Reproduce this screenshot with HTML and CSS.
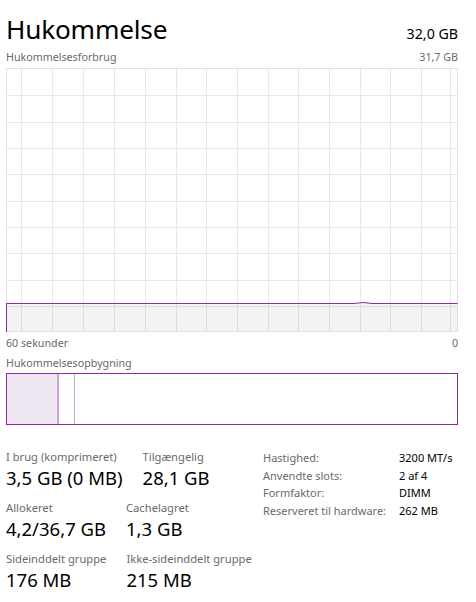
FILE: index.html
```html
<!DOCTYPE html>
<html lang="da">
<head>
<meta charset="utf-8">
<link rel="stylesheet" href="styles.css">
</head>
<body>
<div class="panel">
  <div class="header">
    <div class="title">Hukommelse</div>
    <div class="total">32,0 GB</div>
  </div>
  <div class="sub">
    <span>Hukommelsesforbrug</span>
    <span>31,7 GB</span>
  </div>
  <div class="graph">
    <svg width="452" height="264" viewBox="0 0 452 264">
      <g stroke="#e8e8e8" stroke-width="1">
        <line x1="15.5" y1="0" x2="15.5" y2="264"/>
        <line x1="46.5" y1="0" x2="46.5" y2="264"/>
        <line x1="77.5" y1="0" x2="77.5" y2="264"/>
        <line x1="108.5" y1="0" x2="108.5" y2="264"/>
        <line x1="139.5" y1="0" x2="139.5" y2="264"/>
        <line x1="170.5" y1="0" x2="170.5" y2="264"/>
        <line x1="200.5" y1="0" x2="200.5" y2="264"/>
        <line x1="231.5" y1="0" x2="231.5" y2="264"/>
        <line x1="262.5" y1="0" x2="262.5" y2="264"/>
        <line x1="292.5" y1="0" x2="292.5" y2="264"/>
        <line x1="323.5" y1="0" x2="323.5" y2="264"/>
        <line x1="354.5" y1="0" x2="354.5" y2="264"/>
        <line x1="384.5" y1="0" x2="384.5" y2="264"/>
        <line x1="415.5" y1="0" x2="415.5" y2="264"/>
        <line x1="444.5" y1="0" x2="444.5" y2="264"/>
        <line x1="0" y1="27.5" x2="452" y2="27.5"/>
        <line x1="0" y1="54.5" x2="452" y2="54.5"/>
        <line x1="0" y1="80.5" x2="452" y2="80.5"/>
        <line x1="0" y1="106.5" x2="452" y2="106.5"/>
        <line x1="0" y1="133.5" x2="452" y2="133.5"/>
        <line x1="0" y1="159.5" x2="452" y2="159.5"/>
        <line x1="0" y1="185.5" x2="452" y2="185.5"/>
        <line x1="0" y1="212.5" x2="452" y2="212.5"/>
        <line x1="0" y1="238.5" x2="452" y2="238.5"/>
      </g>
      <path d="M0.5 264 L0.5 235.5 L348 235.5 Q357 233.5 366 235.5 L452 235.5 L452 264 Z" fill="rgba(110,90,130,0.08)" stroke="none"/>
      <rect x="0.5" y="0.5" width="451" height="263" fill="none" stroke="#e0e0e0"/>
      <path d="M0.5 264 L0.5 235.5 L348 235.5 Q357 233.5 366 235.5 L451.5 235.5" fill="none" stroke="#8b2ca0" stroke-width="1"/>
    </svg>
  </div>
  <div class="axis">
    <span>60 sekunder</span>
    <span>0</span>
  </div>
  <div class="sub comp-label">
    <span>Hukommelsesopbygning</span>
  </div>
  <div class="comp">
    <div class="seg inuse"></div>
    <div class="seg modified"></div>
    <div class="seg free"></div>
  </div>
  <div class="stats">
    <div class="left">
      <div class="row">
        <div class="stat"><div class="lbl">I brug (komprimeret)</div><div class="val">3,5 GB (0 MB)</div></div>
        <div class="stat"><div class="lbl">Tilgængelig</div><div class="val">28,1 GB</div></div>
      </div>
      <div class="row">
        <div class="stat"><div class="lbl">Allokeret</div><div class="val">4,2/36,7 GB</div></div>
        <div class="stat"><div class="lbl">Cachelagret</div><div class="val">1,3 GB</div></div>
      </div>
      <div class="row">
        <div class="stat"><div class="lbl">Sideinddelt gruppe</div><div class="val">176 MB</div></div>
        <div class="stat"><div class="lbl">Ikke-sideinddelt gruppe</div><div class="val">215 MB</div></div>
      </div>
    </div>
    <div class="right">
      <div class="kv"><span class="k">Hastighed:</span><span class="v">3200 MT/s</span></div>
      <div class="kv"><span class="k">Anvendte slots:</span><span class="v">2 af 4</span></div>
      <div class="kv"><span class="k">Formfaktor:</span><span class="v">DIMM</span></div>
      <div class="kv"><span class="k">Reserveret til hardware:</span><span class="v">262 MB</span></div>
    </div>
  </div>
</div>
</body>
</html>
```
FILE: styles.css
```css
* { box-sizing: border-box; }
html, body { margin: 0; padding: 0; background: #fff; }
body {
  font-family: "Noto Sans", "Open Sans", sans-serif;
  color: #000;
}
.panel {
  width: 476px;
  padding: 11px 18px 0 6px;
}
.header {
  display: flex;
  justify-content: space-between;
  align-items: baseline;
  height: 40px;
}
.title {
  font-size: 26.2px;
  line-height: 36px;
  font-weight: 400;
  letter-spacing: -0.2px;
}
.total {
  font-size: 14.2px;
  line-height: 20px;
}
.sub {
  display: flex;
  justify-content: space-between;
  font-size: 10.7px;
  line-height: 17px;
  color: #6a6a6a;
  margin-top: -2px;
  height: 19px;
}
.graph {
  height: 264px;
}
.graph svg { display: block; }
.axis {
  display: flex;
  justify-content: space-between;
  font-size: 10.7px;
  line-height: 14px;
  color: #6a6a6a;
  margin-top: 4px;
  height: 19px;
}
.comp-label {
  margin-top: 0;
  height: 18px;
}
.comp {
  display: flex;
  height: 52px;
  border: 1px solid #8b2ca0;
}
.seg { height: 100%; }
.inuse {
  width: 51px;
  background: #efe7f2;
  border-right: 1px solid #c9a6d3;
}
.modified {
  width: 17px;
  border-left: 1px solid #c9a6d3;
  border-right: 1px solid #c9a6d3;
}
.free { flex: 1; }
.stats {
  display: flex;
  margin-top: 24px;
}
.left {
  width: 257px;
  display: flex;
  flex-direction: column;
}
.row {
  display: flex;
  gap: 20px;
  height: 51px;
}
.lbl {
  font-size: 11.2px;
  line-height: 16px;
  color: #6a6a6a;
  white-space: nowrap;
}
.val {
  font-size: 18.5px;
  line-height: 26px;
  white-space: nowrap;
}
.right {
  display: flex;
  flex-direction: column;
}
.kv {
  display: flex;
  font-size: 11px;
  line-height: 17.5px;
}
.k {
  width: 136px;
  color: #6a6a6a;
}
.v { color: #000; }
```
